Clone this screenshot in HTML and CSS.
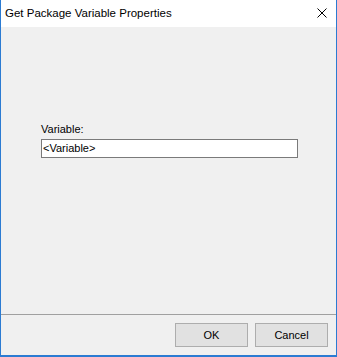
FILE: index.html
```html
<!DOCTYPE html>
<html>
<head>
<meta charset="utf-8">
<link rel="stylesheet" href="styles.css">
</head>
<body>
<div class="window">
  <div class="titlebar">
    <span class="title">Get Package Variable Properties</span>
    <svg class="close" width="10" height="10" viewBox="0 0 10 10"><path d="M0.5 0.5 L9.5 9.5 M9.5 0.5 L0.5 9.5" stroke="#000" stroke-width="1"/></svg>
  </div>
  <div class="content">
    <label class="label">Variable:</label>
    <div class="input">&lt;Variable&gt;</div>
  </div>
  <div class="footer">
    <button class="btn">OK</button>
    <button class="btn">Cancel</button>
  </div>
</div>
</body>
</html>
```

FILE: styles.css
```css
html, body {
  margin: 0;
  padding: 0;
  background: #f0f0f0;
}
.window {
  width: 337px;
  height: 357px;
  box-sizing: border-box;
  border-left: 1px solid #2b7bd2;
  border-right: 1px solid #2b7bd2;
  border-bottom: 2px solid #2b7bd2;
  display: flex;
  flex-direction: column;
  background: #f0f0f0;
}
.titlebar {
  height: 27px;
  flex: none;
  background: #fff;
  display: flex;
  align-items: center;
  justify-content: space-between;
  padding: 0 9px 0 4px;
}
.title {
  font-family: "Liberation Sans", Arial, sans-serif;
  font-size: 11.5px;
  color: #000;
  margin-top: -1px;
}
.close {
  display: block;
  margin-top: -1px;
}
.content {
  flex: 1;
  display: flex;
  flex-direction: column;
  padding: 96px 38px 0 40px;
  border-bottom: 1px solid #a0a0a0;
}
.label {
  font-family: "Liberation Sans", Arial, sans-serif;
  font-size: 11px;
  color: #000;
  line-height: 13px;
  margin-bottom: 3px;
}
.input {
  height: 19px;
  box-sizing: border-box;
  border: 1px solid #7a7a7a;
  background: #fff;
  font-family: "Liberation Sans", Arial, sans-serif;
  font-size: 11px;
  line-height: 17px;
  padding-left: 1px;
  color: #000;
}
.footer {
  height: 40px;
  flex: none;
  display: flex;
  justify-content: flex-end;
  align-items: flex-start;
  gap: 7px;
  padding: 8px 8px 0 0;
  box-sizing: border-box;
}
.btn {
  width: 73px;
  height: 24px;
  margin: 0;
  padding: 0;
  background: #e1e1e1;
  border: 1px solid #adadad;
  font-family: "Liberation Sans", Arial, sans-serif;
  font-size: 11px;
  color: #000;
}
```
